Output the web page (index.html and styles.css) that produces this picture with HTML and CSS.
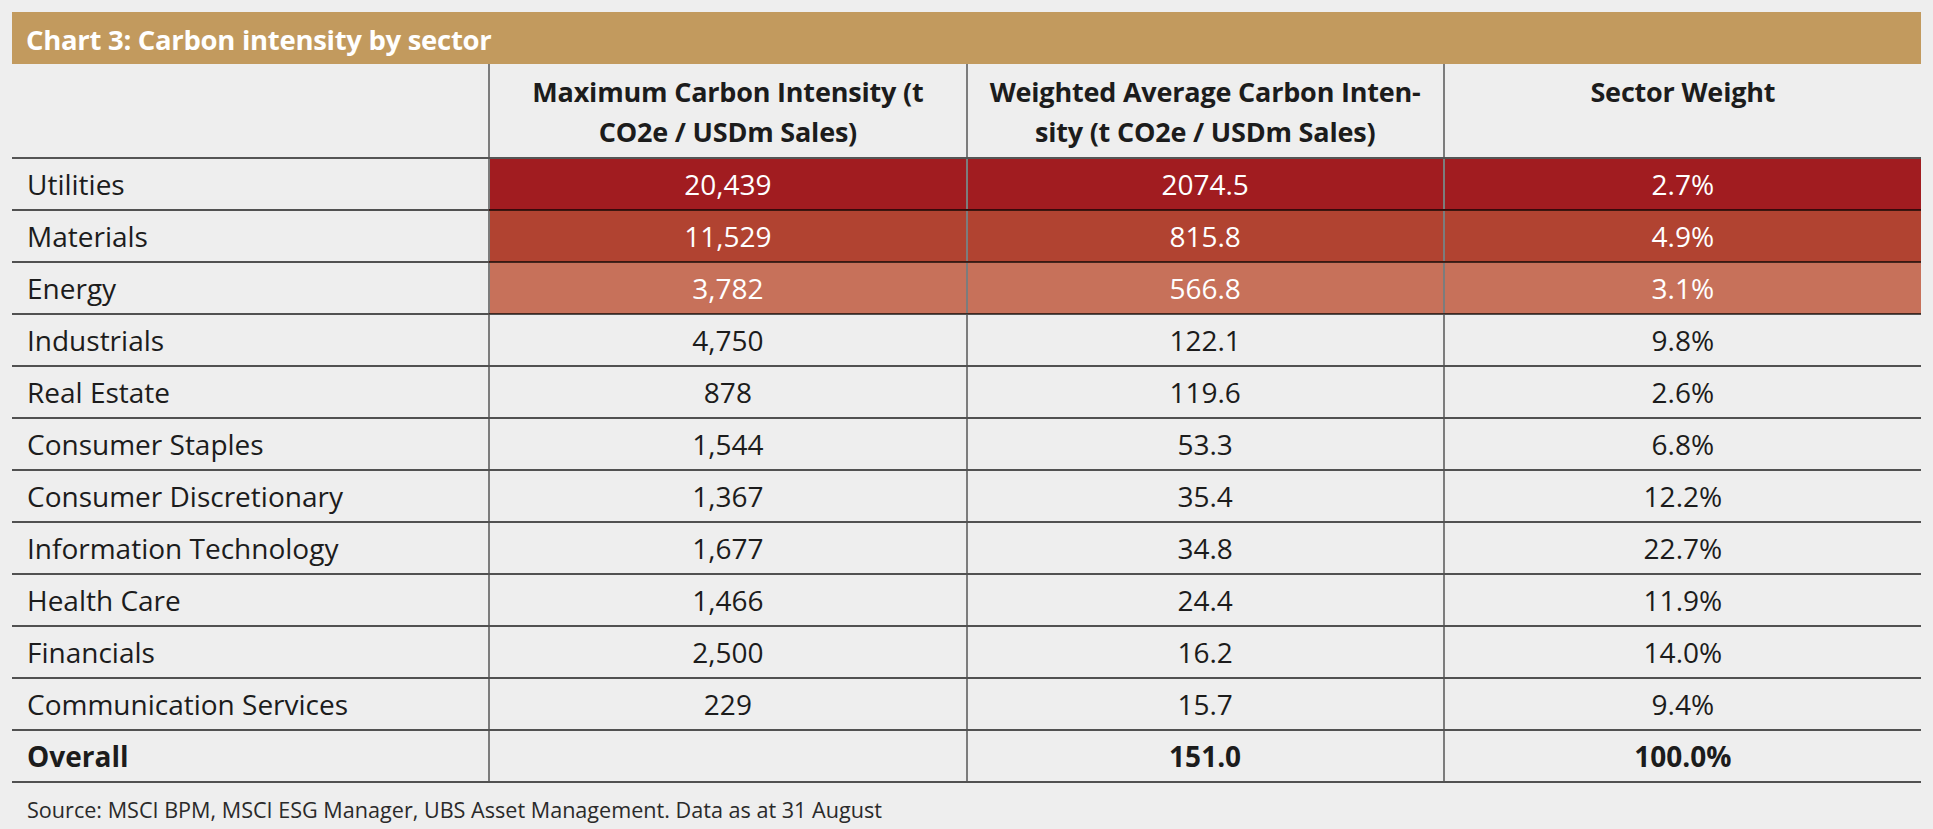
FILE: index.html
```html
<!DOCTYPE html>
<html lang="en">
<head>
<meta charset="utf-8">
<title>Chart 3: Carbon intensity by sector</title>
<link rel="stylesheet" href="styles.css">
</head>
<body>
<div class="page">
  <div class="title">Chart 3: Carbon intensity by sector</div>
  <table class="data">
    <thead>
      <tr>
        <th class="label-col"></th>
        <th>Maximum Carbon Intensity (t<br>CO2e / USDm Sales)</th>
        <th>Weighted Average Carbon Inten-<br>sity (t CO2e / USDm Sales)</th>
        <th>Sector Weight</th>
      </tr>
    </thead>
    <tbody>
      <tr class="heat-1"><td>Utilities</td><td>20,439</td><td>2074.5</td><td>2.7%</td></tr>
      <tr class="heat-2"><td>Materials</td><td>11,529</td><td>815.8</td><td>4.9%</td></tr>
      <tr class="heat-3"><td>Energy</td><td>3,782</td><td>566.8</td><td>3.1%</td></tr>
      <tr><td>Industrials</td><td>4,750</td><td>122.1</td><td>9.8%</td></tr>
      <tr><td>Real Estate</td><td>878</td><td>119.6</td><td>2.6%</td></tr>
      <tr><td>Consumer Staples</td><td>1,544</td><td>53.3</td><td>6.8%</td></tr>
      <tr><td>Consumer Discretionary</td><td>1,367</td><td>35.4</td><td>12.2%</td></tr>
      <tr><td>Information Technology</td><td>1,677</td><td>34.8</td><td>22.7%</td></tr>
      <tr><td>Health Care</td><td>1,466</td><td>24.4</td><td>11.9%</td></tr>
      <tr><td>Financials</td><td>2,500</td><td>16.2</td><td>14.0%</td></tr>
      <tr><td>Communication Services</td><td>229</td><td>15.7</td><td>9.4%</td></tr>
      <tr class="total"><td>Overall</td><td></td><td>151.0</td><td>100.0%</td></tr>
    </tbody>
  </table>
  <p class="source">Source: MSCI BPM, MSCI ESG Manager, UBS Asset Management. Data as at 31 August</p>
</div>
</body>
</html>
```

FILE: styles.css
```css
html, body {
  margin: 0;
  padding: 0;
  background: #eeeeee;
}

body {
  font-family: "Open Sans", "Liberation Sans", sans-serif;
  color: #1c1c1c;
}

.page {
  width: 1909px;
  padding: 12px 12px 0 12px;
}

.title {
  height: 52px;
  background: #c29a5e;
  color: #ffffff;
  font-weight: 700;
  font-size: 27.5px;
  letter-spacing: -0.3px;
  padding-left: 14px;
  padding-top: 3px;
  box-sizing: border-box;
  display: flex;
  align-items: center;
}

.data {
  width: 100%;
  border-collapse: collapse;
  table-layout: fixed;
}

.data th {
  height: 94px;
  padding: 8px 8px 0 8px;
  vertical-align: top;
  text-align: center;
  font-weight: 700;
  font-size: 27px;
  line-height: 40px;
  letter-spacing: -0.2px;
  white-space: nowrap;
  border-bottom: 2px solid #555555;
  box-sizing: border-box;
}

.data td {
  height: 52px;
  padding: 0 8px;
  font-size: 28px;
  text-align: center;
  vertical-align: middle;
  border-bottom: 2px solid rgba(0, 0, 0, 0.66);
  white-space: nowrap;
  box-sizing: border-box;
}

.data td:first-child {
  text-align: left;
  padding-left: 15px;
}

.data th + th,
.data td + td {
  border-left: 2px solid #7c7c7c;
}

.heat-1 td + td {
  background: #a11c20;
  color: #ffffff;
}

.heat-2 td + td {
  background: #b14331;
  color: #ffffff;
}

.heat-3 td + td {
  background: #c7715a;
  color: #ffffff;
}

.total td {
  font-weight: 700;
}

.source {
  margin: 12px 0 0 0;
  padding-left: 15px;
  font-size: 21.6px;
  color: #2a2a2a;
}
```
